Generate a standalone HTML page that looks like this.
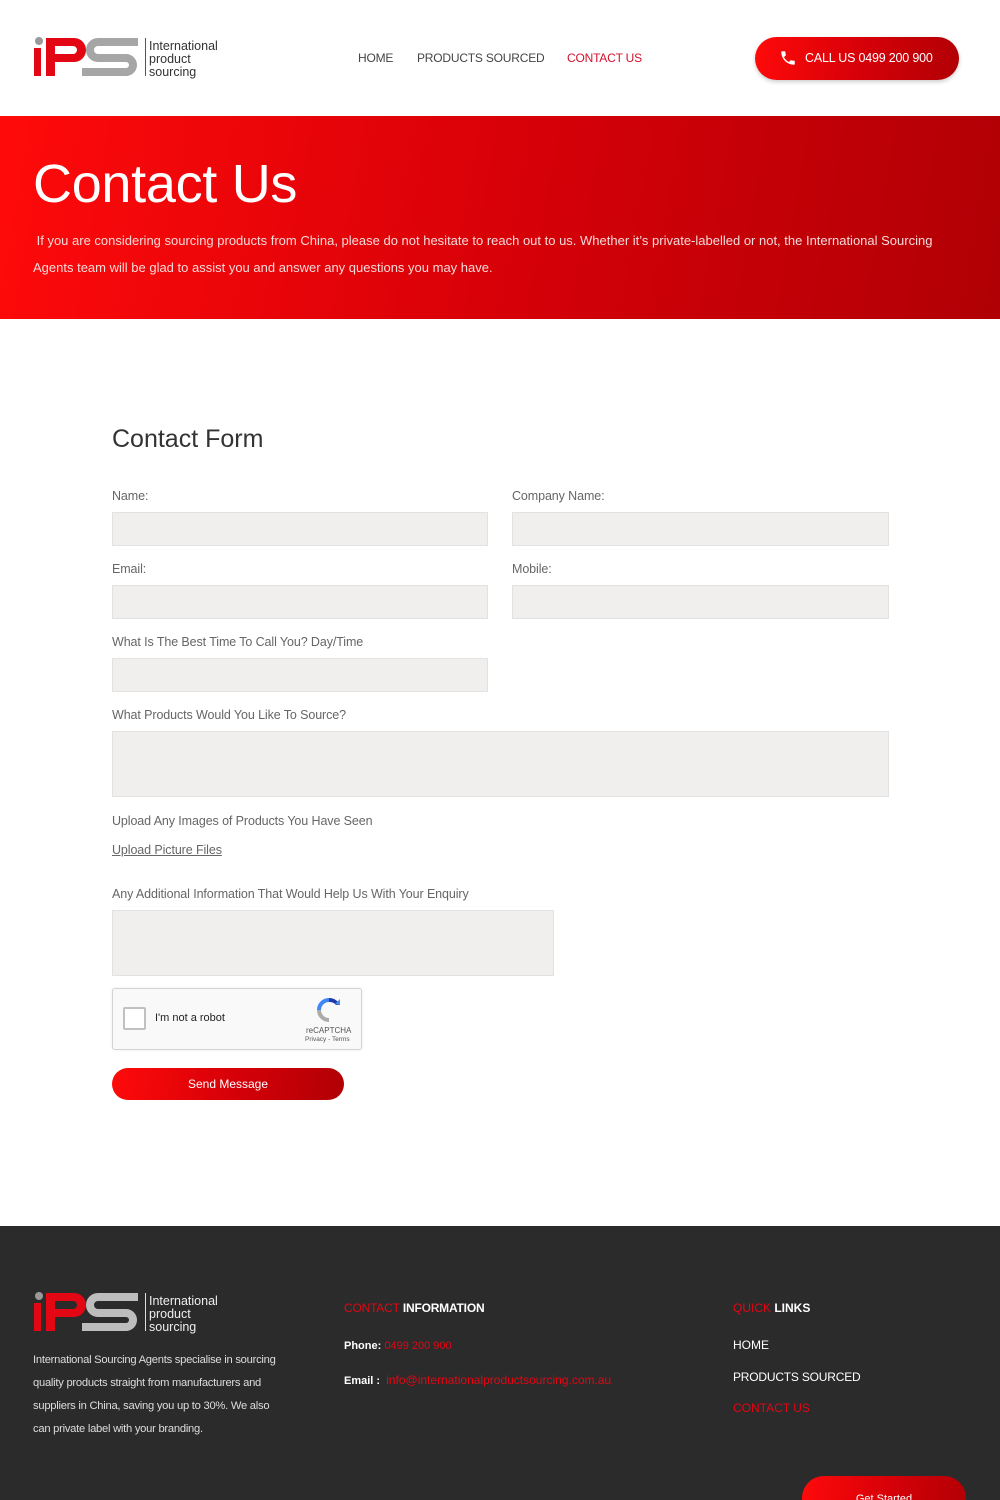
<!DOCTYPE html>
<html><head><meta charset="utf-8"><style>
*{margin:0;padding:0;box-sizing:border-box}
html{width:1000px;height:1500px;overflow:hidden}
body{width:1000px;height:1500px;overflow:hidden;background:#fff;font-family:"Liberation Sans",sans-serif;position:relative}
.a{position:absolute}
.nav{font-size:12px;color:#444;letter-spacing:-0.2px}
.lbl{font-size:12.5px;color:#666;letter-spacing:-0.1px}
.inp{position:absolute;background:#f1efee;border:1px solid #e4e2e1;height:34px}
.red{background:linear-gradient(100deg,#ff0a0a 0%,#d40008 55%,#b00005 100%)}
</style></head><body>
<svg class="a" style="left:30px;top:34px" width="200" height="48" viewBox="0 0 200 48">
<circle cx="9" cy="7" r="4" fill="#999"/>
<rect x="4" y="14" width="7" height="28" fill="#e30613"/>
<path d="M16 4h28a12 12 0 0 1 0 24H25v14h-9z M25 12v8h18a4 4 0 0 0 0-8z" fill="#e30613" fill-rule="evenodd"/>
<path d="M68 4h40v8H68a4 4 0 0 0 0 8h28a11 11 0 0 1 0 22H52v-8h44a3 3 0 0 0 0-6H68a12 12 0 0 1 0-24z" fill="#a6a6a6"/>
<rect x="115" y="4" width="1" height="38" fill="#555"/>
<text x="119" y="16" font-family="Liberation Sans" font-size="12.5" fill="#333">International</text>
<text x="119" y="29" font-family="Liberation Sans" font-size="12.5" fill="#333">product</text>
<text x="119" y="42" font-family="Liberation Sans" font-size="12.5" fill="#333">sourcing</text>
</svg>
<div class="a nav" style="left:358px;top:51px">HOME</div>
<div class="a nav" style="left:417px;top:51px">PRODUCTS SOURCED</div>
<div class="a nav" style="left:567px;top:51px;color:#d3112b">CONTACT US</div>
<div class="a red" style="left:755px;top:37px;width:204px;height:43px;border-radius:22px;box-shadow:0 2px 4px rgba(0,0,0,.2)"></div>
<svg class="a" style="left:779px;top:49px" width="18" height="18" viewBox="0 0 24 24"><path d="M6.6 10.8a15 15 0 0 0 6.6 6.6l2.2-2.2a1 1 0 0 1 1-.25 11.4 11.4 0 0 0 3.6.6 1 1 0 0 1 1 1V20a1 1 0 0 1-1 1A17 17 0 0 1 3 4a1 1 0 0 1 1-1h3.5a1 1 0 0 1 1 1c0 1.250.2 2.45.6 3.6a1 1 0 0 1-.25 1z" fill="#fff"/></svg>
<div class="a" style="left:805px;top:51px;font-size:12.5px;color:#fff;letter-spacing:-0.2px">CALL US 0499 200 900</div>
<div class="a red" style="left:0;top:116px;width:1000px;height:203px"></div>
<div class="a" style="left:33px;top:153px;font-size:54px;color:#fff;letter-spacing:-0.3px">Contact Us</div>
<div class="a" style="left:33px;top:227px;width:940px;font-size:13px;line-height:27px;color:#f5dada;letter-spacing:0">&nbsp;If you are considering sourcing products from China, please do not hesitate to reach out to us. Whether it’s private-labelled or not, the International Sourcing Agents team will be glad to assist you and answer any questions you may have.</div>
<div class="a" style="left:112px;top:425px;font-size:25px;color:#333">Contact Form</div>
<div class="a lbl" style="left:112px;top:489px">Name:</div>
<div class="a lbl" style="left:512px;top:489px">Company Name:</div>
<div class="inp" style="left:112px;top:512px;width:376px"></div>
<div class="inp" style="left:512px;top:512px;width:377px"></div>
<div class="a lbl" style="left:112px;top:562px">Email:</div>
<div class="a lbl" style="left:512px;top:562px">Mobile:</div>
<div class="inp" style="left:112px;top:585px;width:376px"></div>
<div class="inp" style="left:512px;top:585px;width:377px"></div>
<div class="a lbl" style="left:112px;top:635px">What Is The Best Time To Call You? Day/Time</div>
<div class="inp" style="left:112px;top:658px;width:376px"></div>
<div class="a lbl" style="left:112px;top:708px">What Products Would You Like To Source?</div>
<div class="inp" style="left:112px;top:731px;width:777px;height:66px"></div>
<div class="a lbl" style="left:112px;top:814px">Upload Any Images of Products You Have Seen</div>
<div class="a lbl" style="left:112px;top:843px;text-decoration:underline">Upload Picture Files</div>
<div class="a lbl" style="left:112px;top:887px">Any Additional Information That Would Help Us With Your Enquiry</div>
<div class="inp" style="left:112px;top:910px;width:442px;height:66px"></div>
<div class="a" style="left:112px;top:988px;width:250px;height:62px;background:#f9f9f9;border:1px solid #d3d3d3;border-radius:3px;box-shadow:0 0 3px rgba(0,0,0,.08)"></div>
<div class="a" style="left:123px;top:1007px;width:23px;height:23px;background:#fff;border:2px solid #c1c1c1;border-radius:2px"></div>
<div class="a" style="left:155px;top:1012px;font-size:11px;color:#222">I'm not a robot</div>
<svg class="a" style="left:315px;top:996px" width="28" height="28" viewBox="0 0 28 28"><path d="M14 2a12 12 0 0 1 11 7l-4 0a8 8 0 0 0-7-3z" fill="#1c3aa9"/><path d="M25 9v-6l-5 5z" fill="#4a90e2"/><path d="M2 14a12 12 0 0 1 12-12v4a8 8 0 0 0-8 8z" fill="#4285f4"/><path d="M2 14a12 12 0 0 0 12 12v-4a8 8 0 0 1-8-8z" fill="#ababab"/></svg>
<div class="a" style="left:306px;top:1026px;font-size:8px;color:#555">reCAPTCHA</div>
<div class="a" style="left:305px;top:1036px;font-size:6.5px;color:#555">Privacy - Terms</div>
<div class="a red" style="left:112px;top:1068px;width:232px;height:32px;border-radius:16px"></div>
<div class="a" style="left:112px;top:1077px;width:232px;text-align:center;font-size:12px;color:#fff">Send Message</div>
<div class="a" style="left:0;top:1226px;width:1000px;height:274px;background:#2b2b2b;overflow:hidden">
<svg class="a" style="left:30px;top:63px" width="200" height="48" viewBox="0 0 200 48">
<circle cx="9" cy="7" r="4" fill="#999"/>
<rect x="4" y="14" width="7" height="28" fill="#e30613"/>
<path d="M16 4h28a12 12 0 0 1 0 24H25v14h-9z M25 12v8h18a4 4 0 0 0 0-8z" fill="#e30613" fill-rule="evenodd"/>
<path d="M68 4h40v8H68a4 4 0 0 0 0 8h28a11 11 0 0 1 0 22H52v-8h44a3 3 0 0 0 0-6H68a12 12 0 0 1 0-24z" fill="#bdbdbd"/>
<rect x="115" y="4" width="1" height="38" fill="#ddd"/>
<text x="119" y="16" font-family="Liberation Sans" font-size="12.5" fill="#eee">International</text>
<text x="119" y="29" font-family="Liberation Sans" font-size="12.5" fill="#eee">product</text>
<text x="119" y="42" font-family="Liberation Sans" font-size="12.5" fill="#eee">sourcing</text>
</svg>
<div class="a" style="left:33px;top:123px;width:252px;font-size:11.2px;line-height:23px;color:#ddd;letter-spacing:-0.25px">International Sourcing Agents specialise in sourcing quality products straight from manufacturers and suppliers in China, saving you up to 30%. We also can private label with your branding.</div>
<div class="a" style="left:344px;top:75px;font-size:12px;font-weight:bold;color:#fff;letter-spacing:-0.2px"><span style="color:#e30613;font-weight:normal">CONTACT</span> INFORMATION</div>
<div class="a" style="left:344px;top:114px;font-size:11px;font-weight:bold;color:#fff">Phone: <span style="color:#e30613;font-weight:normal">0499 200 900</span></div>
<div class="a" style="left:344px;top:147px;font-size:11px;font-weight:bold;color:#fff">Email : &nbsp;<span style="color:#e30613;font-weight:normal;font-size:12px">info@internationalproductsourcing.com.au</span></div>
<div class="a" style="left:733px;top:75px;font-size:12px;font-weight:bold;color:#fff"><span style="color:#e30613;font-weight:normal">QUICK</span> LINKS</div>
<div class="a" style="left:733px;top:112px;font-size:12px;color:#fff">HOME</div>
<div class="a" style="left:733px;top:144px;font-size:12px;color:#fff;letter-spacing:-0.2px">PRODUCTS SOURCED</div>
<div class="a" style="left:733px;top:175px;font-size:12px;color:#e30613">CONTACT US</div>
<div class="a red" style="left:802px;top:250px;width:164px;height:50px;border-radius:22px"></div>
<div class="a" style="left:802px;top:267px;width:164px;text-align:center;font-size:11px;color:#fff">Get Started</div>
</div>
</body></html>
